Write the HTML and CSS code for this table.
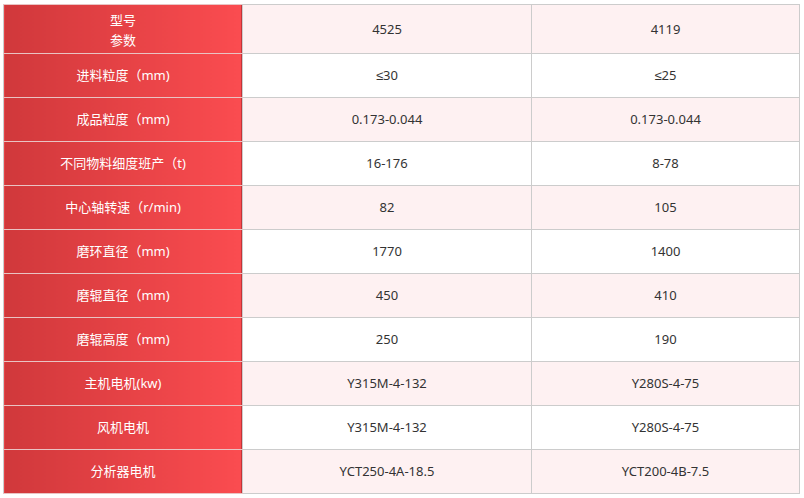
FILE: index.html
```html
<!DOCTYPE html>
<html lang="zh-CN">
<head>
<meta charset="utf-8">
<title>参数表</title>
<link rel="stylesheet" href="styles.css">
</head>
<body>
<div class="wrap">
<table class="spec">
  <colgroup>
    <col class="c1"><col class="c2"><col class="c3">
  </colgroup>
  <tbody>
    <tr class="head alt">
      <th>型号<br>参数</th><td>4525</td><td>4119</td>
    </tr>
    <tr><th>进料粒度（mm)</th><td>≤30</td><td>≤25</td></tr>
    <tr class="alt"><th>成品粒度（mm)</th><td>0.173-0.044</td><td>0.173-0.044</td></tr>
    <tr><th>不同物料细度班产（t)</th><td>16-176</td><td>8-78</td></tr>
    <tr class="alt"><th>中心轴转速（r/min)</th><td>82</td><td>105</td></tr>
    <tr><th>磨环直径（mm)</th><td>1770</td><td>1400</td></tr>
    <tr class="alt"><th>磨辊直径（mm)</th><td>450</td><td>410</td></tr>
    <tr><th>磨辊高度（mm)</th><td>250</td><td>190</td></tr>
    <tr class="alt"><th>主机电机(kw)</th><td>Y315M-4-132</td><td>Y280S-4-75</td></tr>
    <tr><th>风机电机</th><td>Y315M-4-132</td><td>Y280S-4-75</td></tr>
    <tr class="alt"><th>分析器电机</th><td>YCT250-4A-18.5</td><td>YCT200-4B-7.5</td></tr>
  </tbody>
</table>
</div>
</body>
</html>
```
FILE: styles.css
```css
html, body {
  margin: 0;
  padding: 0;
  background: #ffffff;
}
.wrap {
  padding: 4px 0 0 3px;
}
.spec {
  border-collapse: collapse;
  table-layout: fixed;
  width: 796px;
  font-family: "Noto Sans", "Liberation Sans", "Noto Sans CJK SC", sans-serif;
  font-size: 13px;
  color: #333333;
}
.c1 { width: 239px; }
.c2 { width: 289px; }
.c3 { width: 268px; }
.spec th,
.spec td {
  border: 1px solid #cccccc;
  height: 43px;
  padding: 0;
  text-align: center;
  vertical-align: middle;
  font-weight: normal;
  line-height: 19px;
}
.spec th {
  color: #ffffff;
  background: linear-gradient(to right, #d0383b, #fb4c50);
  border-top-color: #e9c3c3;
  border-bottom-color: #e9c3c3;
  box-shadow: inset -1px 0 0 #c23437;
}
.spec .head td {
  height: 48px;
}
.spec .head th {
  height: 46px;
  line-height: 20px;
  padding-top: 2px;
}
.spec tr.alt td {
  background: #fef1f2;
}
```
